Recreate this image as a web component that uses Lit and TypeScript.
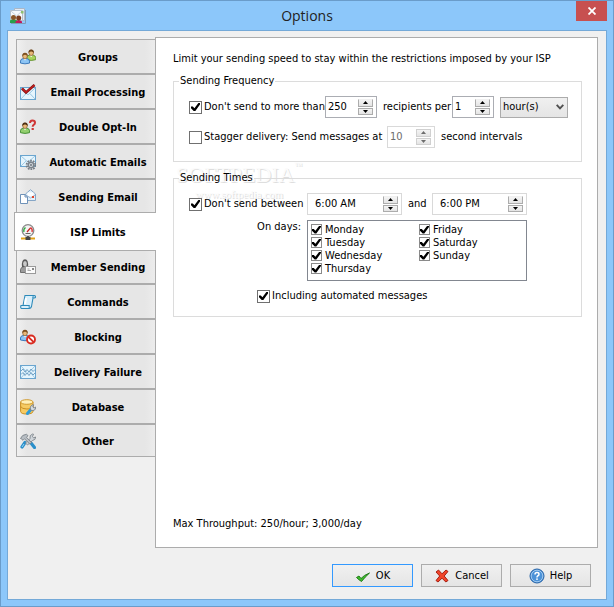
import { LitElement, html, css, svg } from "lit";
import { customElement, property, state } from "lit/decorators.js";
import { classMap } from "lit/directives/class-map.js";

const person = (x: number, y: number, hair: string, shirt: string, edge: string) => svg`
  <g transform="translate(${x} ${y})">
    <path d="M.5 10.500V8.500Q.5 6.500 3 6H7Q9.500 6.500 9.500 8.500V10.500Q5 12 .5 10.500Z" fill=${shirt} stroke=${edge} stroke-width=".9"/>
    <path d="M3.500 6L5 8L6.500 6Z" fill="#fff"/>
    <ellipse cx="5" cy="3.600" rx="2.300" ry="2.700" fill="#e8b878" stroke="#7a4a1c" stroke-width=".6"/>
    <path d="M2.300 3.800Q2 .3 5 .2Q8 .3 7.700 3.800Q6.500 2 5 2.300Q3.500 2 2.300 3.800Z" fill=${hair}/>
  </g>`;

const envelope = (x: number, y: number, w: number, h: number) => svg`
  <rect x=${x + 0.5} y=${y + 0.5} width=${w - 1} height=${h - 1} fill="#e6f5fd" stroke="#6aa5cf"/>
  <path d="M${x + 1} ${y + 1}L${x + w / 2} ${y + h * 0.6}L${x + w - 1} ${y + 1}M${x + 1} ${y + h - 1}L${x + w * 0.38} ${y + h / 2}M${x + w - 1} ${y + h - 1}L${x + w * 0.62} ${y + h / 2}" fill="none" stroke="#9cc8e4"/>`;

const icons: Record<string, unknown> = {
  app: svg`
    <path d="M4.500 .5H14.500V12.500H4.500Z" fill="#e4eaf2" stroke="#a9b7c8"/>
    <path d="M.5 2.500H12.500V12.500H.5Z" fill="#f6f9fc" stroke="#b4c0ce"/>
    <path d="M1 3L6.500 8L12 3" fill="none" stroke="#c7d2de"/>
    <rect x="11" y="3" width="2.500" height="2.500" fill="#8fc06f"/>
    <path d="M0 15V12.500Q3 9.500 7 12.500V15Z" fill="#27a04b"/><circle cx="3.500" cy="9.500" r="2.500" fill="#8a5628"/>
    <path d="M5.500 15V13.500Q8.500 10.500 12 13.500V15Z" fill="#c2185b"/><circle cx="8.700" cy="10" r="2.500" fill="#7b3c1e"/>
    <path d="M15.500 2V15.500H1" fill="none" stroke="#7f9bb6"/>`,
  groups: svg`${person(6.2, 0.2, "#6b4318", "#a9d35c", "#5e8f28")}${person(0, 3.6, "#7d4f1e", "#8cc4f4", "#2f6fb5")}`,
  processing: svg`${envelope(0, 3, 16, 13)}<path d="M2 4.500L6 8.500L14.500 1" fill="none" stroke="#7a1414" stroke-width="2.600"/><path d="M2 4.500L6 8.300L14.500 1" fill="none" stroke="#c41e1e" stroke-width="1.400"/>`,
  optin: svg`${person(0, 3.2, "#4c2d10", "#93cf6e", "#3c8a2c")}
    <path d="M10 4Q10 1.500 12.400 1.500Q15 1.500 15 3.700Q15 5 13.600 5.800Q12.700 6.400 12.700 7.800" fill="none" stroke="#cf3636" stroke-width="2"/><rect x="11.600" y="9" width="2.200" height="2" fill="#cf3636"/>`,
  automatic: svg`${envelope(0, 1, 16, 12)}
    <circle cx="11" cy="11" r="4.300" fill="none" stroke="#777e86" stroke-width="2" stroke-dasharray="1.700 1"/>
    <circle cx="11" cy="11" r="2.700" fill="#d5d9de" stroke="#7b838b" stroke-width="1.400"/><circle cx="11" cy="11" r="1" fill="#6c747c"/>`,
  sending: svg`
    <path d="M5.500 5L10.500 .7L15.500 5V11.500H5.500Z" fill="#e3f0fb" stroke="#86a6c6"/>
    <path d="M7.500 3.500H13.500V7H7.500Z" fill="#fff"/><path d="M6 6L10.500 9L15 6" fill="none" stroke="#9bb5cf"/>
    <rect x="12" y="7" width="2" height="2" fill="#e2472b"/>
    <path d="M.5 5.500H5L7.500 8V14.500H.5Z" fill="#fff" stroke="#6f92b8"/><path d="M5 5.500V8H7.500" fill="none" stroke="#6f92b8"/>`,
  isp: svg`
    <circle cx="8" cy="6.500" r="5.800" fill="#f3f3f3" stroke="#8b8b8b" stroke-width="1.300"/>
    <path d="M4 8A4 4 0 0 1 5.500 3.500" fill="none" stroke="#2faa3f" stroke-width="1.300"/><path d="M10.500 3.500A4 4 0 0 1 12 8" fill="none" stroke="#d33" stroke-width="1.300"/>
    <path d="M7 8L10.500 3.800" stroke="#c62020" stroke-width="1.300"/><path d="M5.500 9.500H10.500" stroke="#666"/>
    <path d="M7 12H9V14H7Z" fill="#555"/><path d="M1 14.500H15" stroke="#e0a21a" stroke-width="2"/><path d="M5.500 13H10.500V16H5.500Z" fill="#444"/>`,
  member: svg`
    <path d="M.5 13.500V10.500Q1 8 4 7.500H6Q9 8 9 11V13.500Z" fill="#9b9b9b" stroke="#6f6f6f"/>
    <path d="M2 8Q1.300 .3 5 .3Q8.700 .3 8 8Z" fill="#5a5a5a"/><ellipse cx="5" cy="4.800" rx="1.900" ry="2.700" fill="#c9c9c9"/>
    <rect x="5.500" y="7.500" width="10" height="7" fill="#fbfbfb" stroke="#9a9a9a"/><path d="M7.500 11.500H11M7.500 10H9.500" stroke="#aaa"/><rect x="12" y="9" width="2" height="2" fill="#888"/>`,
  commands: svg`
    <path d="M5 1.500H14Q15.500 1.500 15.500 3Q15.500 4 14 4H13L11.500 12.500Q11 14.500 9 14.500H1.500Q.5 14 .7 12.500L1 11.500H3Z" fill="#d9effb" stroke="#2d8ab9" stroke-width="1.100"/>
    <path d="M13 4Q12.500 3 13.500 1.700M3 11.500H9.500Q8.500 13 9.500 14.300" fill="none" stroke="#2d8ab9"/><path d="M6 4L5 10" stroke="#fff" stroke-width="2"/>`,
  blocking: svg`${person(0, 0.5, "#7d4f1e", "#8cc4f4", "#2f6fb5")}
    <circle cx="11" cy="10.500" r="4" fill="#fff" stroke="#d92b20" stroke-width="1.900"/><path d="M8.300 7.800L13.700 13.200" stroke="#d92b20" stroke-width="1.900"/>`,
  failure: svg`${envelope(0, 1, 16, 14)}
    <path d="M1 7L3 5L5 8L7 5.500L9 8L11 5L13 7.500L15 5.500M1 10.500L3 8.500L5 11.500L7 9L9 11.500L11 8.500L13 11L15 9" fill="none" stroke="#6597bd" stroke-width=".9"/>`,
  database: svg`
    <path d="M.6 3V12.500Q1 15 6.500 15Q12.500 15 13 12.500V3Z" fill="#f6cb62" stroke="#c98f22"/>
    <ellipse cx="6.800" cy="3" rx="6.200" ry="2.300" fill="#fff0b8" stroke="#d09a30"/><path d="M.6 7.500Q2 10 6.800 10Q12 10 13 7.500" fill="none" stroke="#c98f22"/>
    <path d="M7.500 14.500L10.500 11" stroke="#2d9bd8" stroke-width="3" stroke-linecap="round"/>
    <path d="M10.500 11Q9.300 7.500 12 6L13.700 5.800L12.800 8L14 9L15.800 8Q16 11 13 11.700Z" fill="#d4dae0" stroke="#6f7881" stroke-width=".8"/>`,
  other: svg`
    <path d="M11 10L14.500 14.500" stroke="#2b8fca" stroke-width="3.200" stroke-linecap="round"/><path d="M5 9.500L2 14" stroke="#2b8fca" stroke-width="3.200" stroke-linecap="round"/>
    <path d="M2 14L4 11" stroke="#9bd8f6" stroke-width="1"/>
    <path d="M5.500 10L10 5.500Q9.300 2 12.500 1L13.500 1.200L12.500 3.500L13.500 4.800L15.700 4Q15.700 7 12.500 7.500L7.500 12Z" fill="#d0d5da" stroke="#747b82" stroke-width=".8"/>
    <path d="M.5 5.500Q2 1.500 6.500 1.300L8 2.700L6.500 4.300L11.500 9.500L9.800 11L4.500 5.800L3 7.300Q2 6 .5 5.500Z" fill="#b8bec4" stroke="#747b82" stroke-width=".8"/>`,
  ok: svg`<path d="M1.500 9.500L4 8L6 10.500Q9 7 14.500 5Q10 9 6.500 13.500Q4 12 1.500 9.500Z" fill="#3fbf2c" stroke="#15700f" stroke-width=".9"/>`,
  cancel: svg`<path d="M2 4L4.500 2L8 5.800L12 2L14 3.500L10.200 8L14 12.500L11.800 14L8 10.200L4 14L2 12.500L5.700 8Z" fill="#f0452a" stroke="#9f1408" stroke-width=".9"/>`,
  help: svg`<circle cx="8" cy="8" r="7" fill="#4b92d8" stroke="#2762a5"/><circle cx="8" cy="8" r="5.800" fill="none" stroke="#a8cef2" stroke-width=".9"/>
    <path d="M6 6.500Q6 4.500 8 4.500Q10 4.500 10 6.200Q10 7.300 8.600 8Q8 8.400 8 9.500" fill="none" stroke="#fff" stroke-width="1.500"/><rect x="7.200" y="10.400" width="1.600" height="1.500" fill="#fff"/>`,
};

const icon = (name: string) =>
  html`<svg class="icon" width="16" height="16" viewBox="0 0 16 16" aria-hidden="true">${icons[name]}</svg>`;

const base = css`
  * { box-sizing: border-box; }
  button, input, select { font: inherit; color: inherit; margin: 0; }
  .icon { display: block; flex: none; }
`;

@customElement("spin-field")
class SpinField extends LitElement {
  @property() value = "";
  @property() label = "";
  @property({ type: Boolean }) disabled = false;

  static styles = [base, css`
    :host { box-sizing: border-box; display: inline-flex; flex: none; height: 22px; border: 1px solid #abadb3; background: #fff; padding: 1px 3px 1px 0; }
    :host([soft]), :host([disabled]) { border-color: #d9d9d9; }
    :host([disabled]) { color: #6d6d6d; }
    .text { flex: 1; min-width: 0; width: 0; border: 0; padding: 0 0 0 2px; background: none; outline: none; line-height: 18px; }
    :host([soft]) .text { padding-left: 7px; }
    .steps { display: flex; flex-direction: column; gap: 1px; width: 15px; padding: 1px 0; }
    .step { flex: 1; padding: 0; display: flex; align-items: center; justify-content: center; border: 1px solid #acacac; background: linear-gradient(#f4f4f4, #e4e4e4); }
    .step:first-child { border-top-color: #f0f0f0; }
    :host([disabled]) .step { border-color: #d0d0d0; }
  `];

  private arrow(d: string) {
    return html`<svg width="5" height="3" viewBox="0 0 5 3" aria-hidden="true"><path d=${d} fill="currentColor"/></svg>`;
  }

  render() {
    return html`
      <input class="text" type="text" aria-label=${this.label} .value=${this.value} ?disabled=${this.disabled}>
      <span class="steps">
        <button class="step" aria-label="Increase" ?disabled=${this.disabled}>${this.arrow("M0 3L2.500 0L5 3Z")}</button>
        <button class="step" aria-label="Decrease" ?disabled=${this.disabled}>${this.arrow("M0 0L2.500 3L5 0Z")}</button>
      </span>`;
  }
}

const tabs: [string, string][] = [
  ["groups", "Groups"],
  ["processing", "Email Processing"],
  ["optin", "Double Opt-In"],
  ["automatic", "Automatic Emails"],
  ["sending", "Sending Email"],
  ["isp", "ISP Limits"],
  ["member", "Member Sending"],
  ["commands", "Commands"],
  ["blocking", "Blocking"],
  ["failure", "Delivery Failure"],
  ["database", "Database"],
  ["other", "Other"],
];

const days = ["Monday", "Tuesday", "Wednesday", "Thursday", "Friday", "Saturday", "Sunday"];

@customElement("app-root")
class AppRoot extends LitElement {
  @state() private current = "isp";

  static styles = [base, css`
    :host { display: block; font: 11px/14px "DejaVu Sans Condensed", "DejaVu Sans", sans-serif; color: #000; }
    .window { min-height: 100vh; display: flex; flex-direction: column; border: 1px solid #6a9cca; background: #8cc7fa; padding: 0 6px 6px; }
    .titlebar { display: grid; grid-template-columns: 1fr auto 1fr; align-items: center; height: 29px; }
    .titlebar .icon { margin-left: 3px; }
    .title { margin: 0; font: 14px/20px "Open Sans", "Noto Sans", sans-serif; color: #222; }
    .close { justify-self: end; align-self: start; width: 31px; height: 20px; border: 0; padding: 0; background: #c75050; display: grid; place-items: center; }
    .client { flex: 1; display: flex; flex-direction: column; border: 1px solid #74a9d8; background: #f0f0f0; padding: 6px 8px 12px; }
    .body { flex: 1; display: flex; }
    .tabs { flex: none; width: 139px; padding-top: 2px; display: flex; flex-direction: column; }
    .tab { height: 35px; display: flex; align-items: center; padding: 0 0 0 3px; border: 1px solid #acacac; border-right: 0; font-weight: bold;
      background: linear-gradient(to right, #f0f0f0, #e6e6e6 10px, #e6e6e6 calc(100% - 10px), #ececec); }
    .tab:last-child { height: 33px; }
    .tab.selected { position: relative; z-index: 1; height: 39px; margin: -2px -1px -2px -2px; padding: 0 1px 0 5px; background: #fff; }
    .caption { flex: 1; padding: 2px 0 0 5px; text-align: center; white-space: nowrap; }
    .panel { flex: 1; min-width: 0; position: relative; display: flex; flex-direction: column; gap: 9px; border: 1px solid #acacac; background: #fff; padding: 14px 15px 16px 17px; }
    .intro { margin: 0; line-height: 13px; }
    .group { position: relative; margin: 0; min-width: 0; border: 1px solid #dcdcdc; padding: 8px 15px 13px; display: flex; flex-direction: column; gap: 8px; }
    .group.times { gap: 5px; }
    legend { margin-left: -10px; padding: 0 1px; }
    .row { display: flex; align-items: center; gap: 6px; min-height: 22px; white-space: nowrap; }
    .check { flex: none; display: flex; align-items: center; gap: 2px; white-space: nowrap; }
    .tick { appearance: none; flex: none; display: grid; place-items: center; width: 13px; height: 13px; border: 1px solid #707070; background: #fff; }
    .tick:checked::before { content: ""; width: 9px; height: 8px; background: #000; clip-path: polygon(0 44%, 20% 44%, 38% 66%, 82% 0, 100% 0, 100% 20%, 48% 100%, 30% 100%, 0 66%); }
    .limit { width: 130px; }
    .stagger { width: 192px; }
    .between { width: 112px; }
    .n3 { width: 52px; }
    .n1 { width: 42px; }
    .n2 { width: 48px; }
    .time { width: 95px; }
    .per { width: 63px; text-align: center; }
    .and { width: 18px; text-align: center; }
    .pick { flex: none; display: grid; align-items: center; width: 68px; height: 22px; }
    .pick > * { grid-area: 1 / 1; }
    .unit { appearance: none; width: 100%; height: 21px; border: 1px solid #acacac; border-radius: 0; padding: 0 2px; background: linear-gradient(#f0f0f0, #e5e5e5); }
    .chevron { justify-self: end; margin-right: 4px; pointer-events: none; }
    .days { display: flex; gap: 6px; }
    .dayslabel { width: 112px; text-align: right; }
    .daylist { width: 220px; height: 61px; border: 1px solid #828790; background: #fff; padding: 2px 3px; display: grid; grid-template: repeat(4, 13px) / 108px 1fr; grid-auto-flow: column; }
    .daylist .check { gap: 3px; line-height: 13px; }
    .daylist .tick { width: 11px; height: 11px; border-color: #8a8a8a; }
    .auto { margin: 3px 0 0 68px; }
    .total { margin: auto 0 0; }
    .mark { position: absolute; left: 20px; top: 124px; display: flex; flex-direction: column; align-items: center; color: #fbfbfb; text-shadow: 1px 1px 0 #dedede; pointer-events: none;
      font: 22px/26px "Liberation Serif", serif; }
    .mark small { font: 11px/13px "Liberation Serif", serif; }
    .mark sup { font-size: 8px; line-height: 8px; vertical-align: top; }
    .actions { display: flex; justify-content: flex-end; gap: 8px; padding: 16px 7px 0 0; }
    .action { width: 81px; height: 23px; display: flex; align-items: center; justify-content: center; gap: 5px; padding: 0; border: 1px solid #acacac; background: linear-gradient(#f0f0f0, #e5e5e5); }
    .action.primary { border-color: #3399ff; }
  `];

  private check(label: string, cls = "", checked = true) {
    return html`<label class="check ${cls}"><input class="tick" type="checkbox" ?checked=${checked}>${label}</label>`;
  }

  render() {
    return html`
      <main class="window">
        <header class="titlebar">
          ${icon("app")}
          <h1 class="title">Options</h1>
          <button class="close" aria-label="Close">
            <svg width="8" height="8" viewBox="0 0 8 8" aria-hidden="true"><path d="M.5 .5L7.500 7.500M7.500 .5L.5 7.500" stroke="#fff" stroke-width="1.800"/></svg>
          </button>
        </header>
        <div class="client">
          <div class="body">
            <nav class="tabs" role="tablist">
              ${tabs.map(([id, name]) => html`
                <button role="tab" aria-selected=${id === this.current}
                  class=${classMap({ tab: true, selected: id === this.current })}
                  @click=${() => (this.current = id)}>
                  ${icon(id)}<span class="caption">${name}</span>
                </button>`)}
            </nav>
            <section class="panel">
              <div class="mark" aria-hidden="true"><span>SOFTPEDIA<sup>™</sup></span><small>www.softpedia.com</small></div>
              <p class="intro">Limit your sending speed to stay within the restrictions imposed by your ISP</p>
              <fieldset class="group">
                <legend>Sending Frequency</legend>
                <div class="row">
                  ${this.check("Don't send to more than", "limit")}
                  <spin-field class="n3" value="250" label="Recipients"></spin-field>
                  <span class="per">recipients per</span>
                  <spin-field class="n1" value="1" label="Period"></spin-field>
                  <span class="pick">
                    <select class="unit" aria-label="Period unit"><option>hour(s)</option></select>
                    <svg class="chevron" width="8" height="6" viewBox="0 0 8 6" aria-hidden="true"><path d="M.7 .8L4 4.300L7.300 .8" fill="none" stroke="#505050" stroke-width="1.900"/></svg>
                  </span>
                </div>
                <div class="row">
                  ${this.check("Stagger delivery: Send messages at", "stagger", false)}
                  <spin-field class="n2" value="10" label="Interval" disabled></spin-field>
                  <span>second intervals</span>
                </div>
              </fieldset>
              <fieldset class="group times">
                <legend>Sending Times</legend>
                <div class="row">
                  ${this.check("Don't send between", "between")}
                  <spin-field class="time" value="6:00 AM" label="From" soft></spin-field>
                  <span class="and">and</span>
                  <spin-field class="time" value="6:00 PM" label="To" soft></spin-field>
                </div>
                <div class="days">
                  <span class="dayslabel">On days:</span>
                  <div class="daylist" role="group" aria-label="On days">${days.map((d) => this.check(d))}</div>
                </div>
                ${this.check("Including automated messages", "auto")}
              </fieldset>
              <p class="total">Max Throughput: 250/hour; 3,000/day</p>
            </section>
          </div>
          <footer class="actions">
            <button class="action primary">${icon("ok")}OK</button>
            <button class="action">${icon("cancel")}Cancel</button>
            <button class="action">${icon("help")}Help</button>
          </footer>
        </div>
      </main>`;
  }
}
